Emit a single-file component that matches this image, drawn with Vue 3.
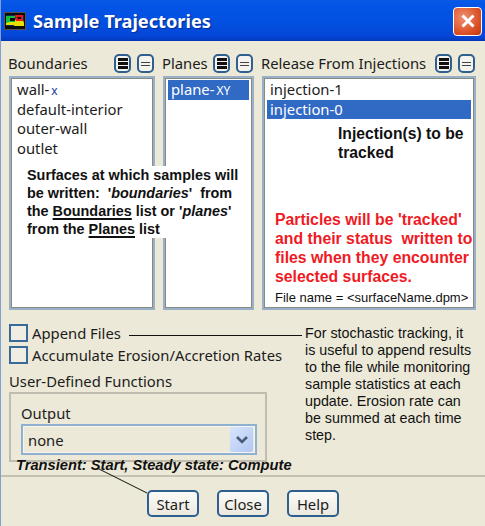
<template>
  <div class="window">
    <div class="titlebar">
      <svg class="app-icon" width="22" height="18" viewBox="0 0 22 18">
        <rect width="22" height="18" fill="#55554a" />
        <rect x="1" y="1" width="20" height="16" fill="#0c0c0c" />
        <rect x="2" y="3" width="18" height="11" fill="#0a2a58" />
        <path d="M2 6h8l2 2h7l1 3v3H11L9 13H2z" fill="#e8e000" />
        <path d="M2 4h9v6H6l-4 1z" fill="#10c040" />
        <path d="M6 6h5v3H6z" fill="#0a0a0a" />
        <path d="M11 3h8v6h-7z" fill="#e81818" />
        <path d="M13 5h4v2h-3z" fill="#120808" />
      </svg>
      <span class="title">Sample Trajectories</span>
      <button class="close-x">
        <svg width="16" height="16" viewBox="0 0 16 16">
          <path d="M2.5 2.5l11 11M13.5 2.5l-11 11" stroke="#fff" stroke-width="3" />
        </svg>
      </button>
    </div>

    <div class="body">
      <div class="lists">
        <div v-for="panel in panels" :key="panel.title" class="panel" :class="panel.cls">
          <div class="panel-head">
            <span class="panel-title">{{ panel.title }}</span>
            <span class="tiny-btns">
              <span class="tiny-btn"><i class="dark"></i><i class="dark"></i><i class="dark"></i></span>
              <span class="tiny-btn"><i></i><i></i></span>
            </span>
          </div>
          <ul class="listbox">
            <li v-for="row in panel.rows" :key="row.name" :class="{ selected: row.selected }">
              {{ row.name }}<small v-if="row.suffix" class="suffix">{{ row.suffix }}</small>
            </li>
          </ul>
        </div>
      </div>

      <div class="options">
        <label class="check"><span class="box"></span>Append Files</label>
        <label class="check"><span class="box"></span>Accumulate Erosion/Accretion Rates</label>
        <div class="udf-title">User-Defined Functions</div>
        <div class="udf-group">
          <div class="output-label">Output</div>
          <div class="select">
            <span class="select-value">none</span>
            <span class="select-arrow">
              <svg width="14" height="10" viewBox="0 0 14 10">
                <path d="M2 2l5 5 5-5" fill="none" stroke="#4a5a78" stroke-width="2.6" />
              </svg>
            </span>
          </div>
        </div>
      </div>

      <div class="footer">
        <button class="btn">Start</button>
        <button class="btn">Close</button>
        <button class="btn">Help</button>
      </div>
    </div>

    <!-- annotations pasted over the dialog -->
    <div class="note note-surfaces">
      Surfaces at which samples will<br />
      be written:&nbsp; '<em>boundaries</em>'&nbsp; from<br />
      the <u>Boundaries</u> list or '<em>planes</em>'<br />
      from the <u>Planes</u> list
    </div>
    <div class="note note-tracked">Injection(s) to be<br />tracked</div>
    <div class="note note-red">
      Particles will be 'tracked'<br />
      and their status&nbsp; written to<br />
      files when they encounter<br />
      selected surfaces.
    </div>
    <div class="note note-file">File name = &lt;surfaceName.dpm&gt;</div>
    <div class="note note-append">
      For stochastic tracking, it<br />
      is useful to append results<br />
      to the file while monitoring<br />
      sample statistics at each<br />
      update. Erosion rate can<br />
      be summed at each time<br />
      step.
    </div>
    <div class="note note-transient">Transient: Start, Steady state: Compute</div>
    <svg class="leaders" width="485" height="526" viewBox="0 0 485 526">
      <path d="M129 335.5H302" stroke="#111" stroke-width="1" />
      <path d="M97 468L147 493" stroke="#111" stroke-width="1" />
    </svg>
  </div>
</template>

<script setup>
const panels = [
  {
    title: 'Boundaries',
    cls: 'p-bound',
    rows: [
      { name: 'wall-', suffix: 'x' },
      { name: 'default-interior' },
      { name: 'outer-wall' },
      { name: 'outlet' }
    ]
  },
  {
    title: 'Planes',
    cls: 'p-planes',
    rows: [{ name: 'plane-', suffix: 'XY', selected: true }]
  },
  {
    title: 'Release From Injections',
    cls: 'p-release',
    rows: [{ name: 'injection-1' }, { name: 'injection-0', selected: true }]
  }
]
</script>

<style>
html,
body {
  margin: 0;
  background: #ece9d8;
}
</style>

<style scoped>
.window {
  position: relative;
  width: 485px;
  height: 526px;
  overflow: hidden;
  background: #ece9d8;
  font-family: "Noto Sans", sans-serif;
  font-size: 14.8px;
  color: #1c1c1c;
  box-sizing: border-box;
  border-left: 1px solid #7f9fd8;
}

.titlebar {
  display: flex;
  align-items: center;
  height: 41px;
  margin-left: -1px;
  padding: 1px 3px 0 4px;
  box-sizing: border-box;
  background: linear-gradient(#0a5ae8 0, #0454e6 12%, #0250e0 55%, #0546d8 88%, #0338b8 100%);
}

.app-icon {
  flex: none;
}

.title {
  margin-left: 7px;
  flex: 1;
  font-weight: 700;
  font-size: 18.2px;
  color: #fff;
  text-shadow: 1px 1px 1px #0a2a90;
}

.close-x {
  display: flex;
  align-items: center;
  justify-content: center;
  width: 29px;
  height: 29px;
  padding: 0;
  border: 1px solid #fff;
  border-radius: 4px;
  background: radial-gradient(circle at 35% 35%, #f09070, #d84a20 70%, #c03808);
}

.body {
  padding: 10px 8px 0 8px;
}

.lists {
  display: flex;
  gap: 8px;
}

.panel {
  flex: none;
}

.p-bound {
  width: 146px;
}

.p-planes {
  width: 91px;
}

.p-release {
  width: 214px;
}

.panel-head {
  display: flex;
  align-items: center;
  justify-content: space-between;
  height: 25px;
  margin-left: -1px;
}

.panel-title {
  position: relative;
  top: -1px;
  white-space: nowrap;
}

.tiny-btns {
  display: flex;
  gap: 6px;
  margin-right: 1px;
}

.tiny-btn {
  display: flex;
  flex-direction: column;
  align-items: center;
  justify-content: center;
  gap: 2px;
  width: 17px;
  height: 19px;
  box-sizing: border-box;
  border: 2px solid #2f5f8f;
  border-radius: 5px;
  background: #f4f3ee;
}

.tiny-btn i {
  display: block;
  width: 9px;
  height: 1px;
  background: #444;
}

.tiny-btn i.dark {
  width: 10px;
  height: 3px;
  background: #111;
  margin: 0;
}

.tiny-btn:has(.dark) {
  gap: 1px;
}

.listbox {
  list-style: none;
  height: 234px;
  margin: 0;
  padding: 2px;
  box-sizing: border-box;
  background: #fff;
  border: 2px solid #98b0c8;
  box-shadow: inset 0 0 0 1px #8a8a84, inset 0 0 0 2px #fff;
  overflow: hidden;
}

.listbox li {
  height: 19.5px;
  line-height: 19.5px;
  padding-left: 3px;
  white-space: nowrap;
  margin: 0 1px;
}

.listbox li.selected {
  background: #316ac5;
  color: #fff;
}

.suffix {
  margin-left: 2px;
  font-size: 12px;
  color: #1a3a9a;
}

.selected .suffix {
  color: #fff;
}

.options {
  display: flex;
  flex-direction: column;
  align-items: flex-start;
  margin-top: 12px;
}

.check {
  display: flex;
  align-items: center;
  gap: 4px;
  height: 22px;
  white-space: nowrap;
}

.box {
  width: 19px;
  height: 18px;
  box-sizing: border-box;
  border: 2px solid #3a6a9a;
  background: #f0eee2;
}

.udf-title {
  margin-top: 5px;
  height: 21px;
  line-height: 21px;
}

.udf-group {
  width: 258px;
  height: 70px;
  padding: 9px 0 0 10px;
  box-sizing: border-box;
  border: 2px solid #c0bdb0;
}

.output-label {
  height: 21px;
  line-height: 21px;
}

.select {
  display: flex;
  align-items: center;
  justify-content: space-between;
  height: 31px;
  width: 236px;
  box-sizing: border-box;
  border: 2px solid #8fb0d0;
  box-shadow: inset 0 0 0 1px #f6f5ee;
  padding: 1px 2px 1px 4px;
}

.select-value {
  margin-left: 1px;
}

.select-arrow {
  display: flex;
  align-items: center;
  justify-content: center;
  width: 23px;
  height: 25px;
  background: linear-gradient(135deg, #d8e4fc, #b0c8f4);
  border-radius: 2px;
}

.footer {
  display: flex;
  justify-content: center;
  gap: 18px;
  margin: 13px -8px 0 -8px;
  padding-top: 13px;
  border-top: 2px solid #c5c2b2;
}

.btn {
  width: 52px;
  height: 27px;
  padding: 0;
  font-family: "Noto Sans", sans-serif;
  font-size: 14.8px;
  color: #1c1c1c;
  border: 2px solid #2f5f8f;
  border-radius: 5px;
  background: linear-gradient(#fbfbf8, #ece9de);
}

.note {
  position: absolute;
  font-family: "Liberation Sans", Arial, sans-serif;
  color: #111;
  white-space: nowrap;
}

.note-surfaces {
  left: 24px;
  top: 166px;
  padding: 0 2px;
  background: #fff;
  font-weight: 700;
  font-size: 14.4px;
  line-height: 18px;
}

.note-surfaces u {
  text-underline-offset: 2px;
  text-decoration-thickness: 2px;
}

.note-tracked {
  left: 337px;
  top: 124px;
  font-weight: 700;
  font-size: 15.7px;
  line-height: 19px;
}

.note-red {
  left: 274px;
  top: 210px;
  font-weight: 700;
  font-size: 15.8px;
  line-height: 19px;
  color: #f01a24;
}

.note-file {
  left: 274px;
  top: 290px;
  font-size: 13px;
  line-height: 15px;
}

.note-append {
  left: 304px;
  top: 325px;
  font-size: 14.3px;
  line-height: 17px;
}

.note-transient {
  left: 15px;
  top: 456px;
  font-weight: 700;
  font-style: italic;
  font-size: 14.7px;
  line-height: 18px;
}

.leaders {
  position: absolute;
  left: -1px;
  top: 0;
  pointer-events: none;
}
</style>
